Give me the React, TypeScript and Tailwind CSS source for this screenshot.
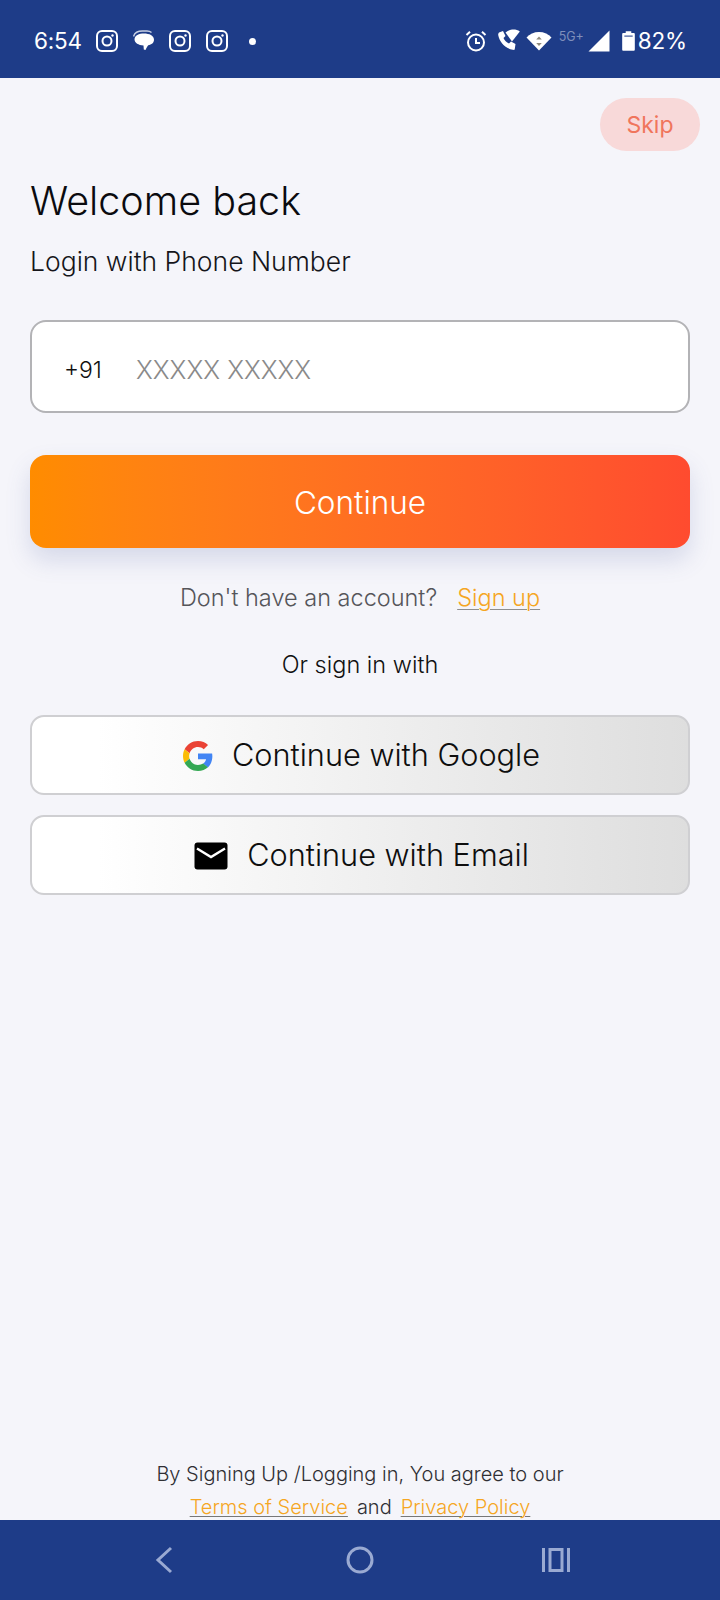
// App.tsx
const font = { fontFamily: 'Inter, "Noto Sans", sans-serif' };

function InstagramIcon() {
    return (
        <svg width="22" height="22" viewBox="0 0 22 22" fill="none" stroke="white" strokeWidth="2">
            <rect x="1" y="1" width="20" height="20" rx="5" />
            <circle cx="11" cy="11" r="4.5" />
            <circle cx="16.5" cy="5.5" r="1.2" fill="white" stroke="none" />
        </svg>
    );
}

function ChatIcon() {
    return (
        <svg width="22" height="22" viewBox="0 0 22 22">
            <path d="M0.500 6.500C1.500 2.800 5 1 9.500 1h4.500c2 0 3.500.6 4.500 1.500" fill="none" stroke="#c8d0e4" strokeWidth="1.400" />
            <path d="M11 3.500c5.300 0 10 2 10 6.300 0 3-2.400 5-5.800 5.500-.9 1-2 3.200-2.700 4.700l-1.700-.5-.3-4C5.500 15.200 1.500 13 1.500 9.300c0-3.800 4.500-5.800 9.500-5.800z" fill="white" />
        </svg>
    );
}

function AlarmIcon() {
    return (
        <svg width="22" height="22" viewBox="0 0 22 22" fill="none" stroke="white" strokeWidth="2">
            <circle cx="11" cy="12.500" r="8" />
            <path d="M11 8v5h4" />
            <path d="M1.500 5L5 1.800M20.500 5L17 1.800" />
        </svg>
    );
}

function CallWifiIcon() {
    return (
        <svg width="24" height="24" viewBox="0 0 24 24" fill="white">
            <path d="M2 3.500l4-1.500 2.500 5-2 2c1 2.500 3 4.500 5.500 5.500l2-2 4.500 2.500-.8 5.500c-.3.500-1 .5-2 .3C8 19.500 2.500 13 1.200 6c-.1-1 .2-2 .8-2.500z" />
            <path d="M8.500 3.500C11 1.300 14 0.500 16.500 0.500c2.200 0 4.500.6 6.300 2L15 12.500z" />
        </svg>
    );
}

function WifiIcon() {
    return (
        <svg width="26" height="20" viewBox="0 0 26 20">
            <path d="M13 19.500L0.500 6.500C3.500 3 8 1 13 1s9.500 2 12.500 5.500z" fill="white" />
            <path d="M13 5.500l-2.800 3h5.600zM13 15l2.800-3h-5.600z" fill="#8f8a7d" />
        </svg>
    );
}

function SignalIcon() {
    return (
        <svg width="22" height="22" viewBox="0 0 22 22" fill="white">
            <path d="M21.500 0.500V21.500H0.500z" />
        </svg>
    );
}

function BatteryIcon() {
    return (
        <svg width="13" height="22" viewBox="0 0 14 22" fill="white">
            <path d="M4 0.500h6v2h2.500c.8 0 1.300.5 1.300 1.300v16.400c0 .8-.5 1.300-1.300 1.300h-11c-.8 0-1.300-.5-1.300-1.300V3.800c0-.8.500-1.300 1.300-1.300H4z" />
            <rect x="2.500" y="5" width="9" height="1.500" fill="#5a6fa8" />
        </svg>
    );
}

function GoogleIcon() {
    return (
        <svg width="30" height="30" viewBox="0 0 48 48">
            <path fill="#EA4335" d="M24 9.500c3.540 0 6.710 1.220 9.210 3.600l6.850-6.850C35.900 2.380 30.470 0 24 0 14.620 0 6.510 5.380 2.560 13.220l7.980 6.190C12.430 13.720 17.740 9.500 24 9.500z" />
            <path fill="#4285F4" d="M46.980 24.550c0-1.570-.15-3.090-.38-4.550H24v9.020h12.940c-.58 2.960-2.260 5.480-4.780 7.180l7.730 6c4.510-4.180 7.090-10.360 7.090-17.650z" />
            <path fill="#FBBC05" d="M10.530 28.590c-.48-1.450-.76-2.990-.76-4.590s.27-3.140.76-4.590l-7.980-6.190C.92 16.460 0 20.120 0 24c0 3.880.92 7.540 2.560 10.780l7.970-6.190z" />
            <path fill="#34A853" d="M24 48c6.480 0 11.930-2.130 15.890-5.810l-7.730-6c-2.150 1.450-4.920 2.300-8.160 2.300-6.260 0-11.570-4.220-13.470-9.910l-7.980 6.190C6.510 42.620 14.620 48 24 48z" />
        </svg>
    );
}

function MailIcon() {
    return (
        <svg width="34" height="28" viewBox="0 0 34 28">
            <rect x="0.500" y="0.500" width="33" height="27" rx="3" fill="black" />
            <path d="M3 6.500l14 8.500 14-8.500" fill="none" stroke="white" strokeWidth="2.400" />
        </svg>
    );
}

function StatusBar() {
    return (
        <div className="flex h-[78px] shrink-0 items-center justify-between bg-[#1e3c88] pl-[34px] pr-[33px] pt-[4px] text-white">
            <div className="flex items-center">
                <span className="w-[62px] text-[22.5px] leading-none tracking-[-0.2px]">6:54</span>
                <span className="flex w-[36.500px]"><InstagramIcon /></span>
                <span className="flex w-[36.500px]"><ChatIcon /></span>
                <span className="flex w-[36.500px]"><InstagramIcon /></span>
                <span className="flex w-[36.500px]"><InstagramIcon /></span>
                <span className="ml-[7px] h-[7px] w-[7px] rounded-full bg-white" />
            </div>
            <div className="flex items-center">
                <AlarmIcon />
                <span className="ml-[10px] flex"><CallWifiIcon /></span>
                <span className="ml-[5px] flex"><WifiIcon /></span>
                <span className="mb-[7px] ml-[7px] text-[12.500px] leading-none text-[#7f8fbb]">5G+</span>
                <span className="ml-[4px] flex"><SignalIcon /></span>
                <span className="ml-[12px] flex"><BatteryIcon /></span>
                <span className="ml-[3px] text-[22.5px] leading-none tracking-[-0.2px]">82%</span>
            </div>
        </div>
    );
}

function NavBar() {
    return (
        <div className="flex h-[80px] shrink-0 items-center bg-[#1e3c88] pl-[155px]">
            <svg width="18" height="28" viewBox="0 0 18 28" fill="none" stroke="#9aaad2" strokeWidth="3">
                <path d="M16 2L3 14l13 12" />
            </svg>
            <svg className="ml-[173px]" width="28" height="28" viewBox="0 0 28 28" fill="none" stroke="#9aaad2" strokeWidth="3">
                <circle cx="14" cy="14" r="12" />
            </svg>
            <svg className="ml-[168px]" width="28" height="24" viewBox="0 0 28 24" fill="none" stroke="#9aaad2" strokeWidth="3">
                <path d="M1.500 0v24M26.500 0v24" />
                <rect x="8" y="1.500" width="12" height="21" />
            </svg>
        </div>
    );
}

export default function App() {
    return (
        <div className="flex h-[1600px] w-[720px] flex-col bg-[#f5f5fa]" style={font}>
            <StatusBar />
            <main className="flex flex-1 flex-col px-[30px]">
                <div className="mr-[-10px] mt-[20px] flex justify-end">
                    <button className="flex h-[53px] w-[100px] items-center justify-center rounded-full bg-[#f8d9d9] pt-[1px] text-[23px] text-[#f0755c]">
                        Skip
                    </button>
                </div>
                <h1 className="mt-[25px] text-[39.500px] font-[350] leading-[50px] text-[#0b0b0f]">Welcome back</h1>
                <p className="mt-[18px] text-[26.500px] font-[350] leading-[34px] text-[#15151a]">Login with Phone Number</p>

                <div className="mt-[42px] flex h-[93px] items-center rounded-[16px] border-2 border-[#b3b3b6] bg-white pl-[32px] pt-[7px]">
                    <span className="w-[72px] text-[23px] font-[350] text-[#111]">+91</span>
                    <span className="text-[25.400px] font-light text-[#8a8a8a]">XXXXX XXXXX</span>
                </div>

                <button className="mt-[42px] flex h-[93px] items-center justify-center rounded-[16px] bg-gradient-to-r from-[#ff8c00] to-[#ff4b2f] pt-[2px] text-[31.500px] font-light text-white shadow-[0_12px_24px_rgba(70,90,160,0.18)]">
                    Continue
                </button>

                <div className="mt-[34px] flex items-center justify-center text-[23.500px] font-light leading-[32px]">
                    <span className="text-[#55555a]">Don't have an account?</span>
                    <a className="ml-[20px] text-[#f5a623] underline decoration-[#8f8f8f] decoration-1 underline-offset-3">Sign up</a>
                </div>
                <p className="mt-[35px] text-center text-[23.500px] font-[350] leading-[32px] text-[#111]">Or sign in with</p>

                <button className="mt-[34px] flex h-[80px] items-center justify-center gap-[19px] rounded-[14px] border-2 border-[#cfcfd2] bg-gradient-to-r from-white from-10% to-[#dedede] pl-[3px] pt-[1px] text-[30.700px] font-[350] text-[#0e0e0e]">
                    <GoogleIcon />
                    Continue with Google
                </button>
                <button className="mt-[20px] flex h-[80px] items-center justify-center gap-[19px] rounded-[14px] border-2 border-[#cfcfd2] bg-gradient-to-r from-white from-10% to-[#dedede] pl-[3px] pt-[1px] text-[30.700px] font-[350] text-[#0e0e0e]">
                    <MailIcon />
                    Continue with Email
                </button>

                <div className="-mb-1 mt-auto text-center text-[20px] font-[350] leading-[33px] text-[#2f2f34]">
                    <p>By Signing Up /Logging in, You agree to our</p>
                    <p className="flex items-center justify-center">
                        <a className="text-[#f5a623] underline decoration-[#777] decoration-1 underline-offset-2">Terms of Service</a>
                        <span className="mx-[9px]">and</span>
                        <a className="text-[#f5a623] underline decoration-[#777] decoration-1 underline-offset-2">Privacy Policy</a>
                    </p>
                </div>
            </main>
            <NavBar />
        </div>
    );
}
